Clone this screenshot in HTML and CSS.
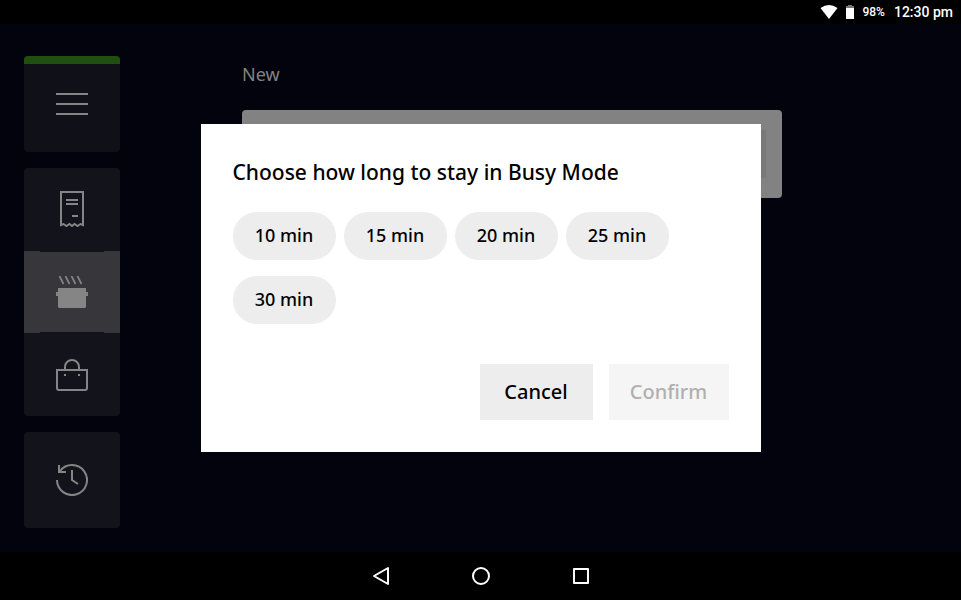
FILE: index.html
```html
<!DOCTYPE html>
<html lang="en">
<head>
<meta charset="utf-8">
<meta name="viewport" content="width=device-width, initial-scale=1">
<title>Busy Mode</title>
<link rel="stylesheet" href="styles.css">
</head>
<body>
<header class="status">
  <svg width="18" height="14" viewBox="0 0 18 14" aria-hidden="true"><path d="M0.500 3Q9-2.800 17.500 3L9 14Z" fill="#fff"/></svg>
  <svg width="8" height="14" viewBox="0 0 8 14" aria-hidden="true"><path d="M2 0H6V1H8V4H0V1H2Z" fill="#777"/><path d="M0 3H8V14H0Z" fill="#fff"/></svg>
  <span class="battery">98%</span>
  <time class="clock">12:30 pm</time>
</header>
<main class="stage">
  <nav class="side">
    <button class="tile menu" aria-label="Menu">
      <svg width="32" height="32" viewBox="0 0 32 32"><path d="M0 5H32V7H0ZM0 15H32V17H0ZM0 25H32V27H0Z" fill="#858585"/></svg>
    </button>
    <div class="group">
      <button class="tab" aria-label="Orders">
        <svg width="24" height="36" viewBox="0 0 24 36" fill="none" stroke="#858585" stroke-width="2"><path d="M1 34V1H23V34L20.500 33L17.500 35L14.500 33L12 35L9.500 33L6.500 35L3.500 33Z"/><path d="M6 9H18M6 13H18M12 25H18"/></svg>
      </button>
      <button class="tab active" aria-label="Preparing">
        <svg width="32" height="32" viewBox="0 0 32 32"><path d="M3.500 0L7.500 8M9.500 0L13.500 8M15.500 0L19.500 8M21.500 0L25.500 8" fill="none" stroke="#858585" stroke-width="1.700"/><path d="M2 12H30V16H32V20H30V31L29 32H3L2 31V20H0V16H2Z" fill="#858585"/></svg>
      </button>
      <button class="tab" aria-label="Ready">
        <svg width="32" height="32" viewBox="0 0 32 32" fill="none" stroke="#858585" stroke-width="2"><path d="M1 11H31V29Q31 31 29 31H3Q1 31 1 29ZM9 11V8A7 7 0 0 1 23 8V11M8 16H10M22 16H24"/></svg>
      </button>
    </div>
    <button class="tile" aria-label="History">
      <svg width="32" height="32" viewBox="0 0 32 32" fill="none" stroke="#858585" stroke-width="2"><path d="M1 16A15 15 0 1 0 4 7M3 1V8H10M16 6V16L22 20"/></svg>
    </button>
  </nav>
  <section class="orders">
    <h1>New</h1>
    <div class="card"><div class="thumb"></div></div>
  </section>
  <div class="overlay">
    <div class="dialog" role="dialog" aria-modal="true" aria-labelledby="title">
      <h2 id="title">Choose how long to stay in Busy Mode</h2>
      <div class="chips">
        <button>10 min</button>
        <button>15 min</button>
        <button>20 min</button>
        <button>25 min</button>
        <button>30 min</button>
      </div>
      <div class="actions">
        <button class="cancel">Cancel</button>
        <button class="confirm" disabled>Confirm</button>
      </div>
    </div>
  </div>
</main>
<footer class="system">
  <button aria-label="Back"><svg width="20" height="20" viewBox="0 0 20 20"><path d="M3 10L17 2V18Z"/></svg></button>
  <button aria-label="Home"><svg width="20" height="20" viewBox="0 0 20 20"><circle cx="10" cy="10" r="8"/></svg></button>
  <button aria-label="Recent apps"><svg width="20" height="20" viewBox="0 0 20 20"><path d="M3 3H17V17H3Z"/></svg></button>
</footer>
</body>
</html>
```
FILE: styles.css
```css
* {
  box-sizing: border-box;
}

body {
  margin: 0;
  min-height: 100vh;
  display: flex;
  flex-direction: column;
  background: #000;
  font-family: "Noto Sans", sans-serif;
}

button {
  border: 0;
  padding: 0;
  font: inherit;
  color: inherit;
  background: none;
}

svg {
  display: block;
}

h1,
h2 {
  margin: 0;
}

.status {
  height: 24px;
  padding-right: 8px;
  display: flex;
  align-items: center;
  justify-content: flex-end;
  gap: 8px;
  color: #fff;
  font-family: Roboto, sans-serif;
  font-weight: 500;
}

.battery {
  margin-right: 1px;
  font-size: 12px;
}

.clock {
  font-size: 14px;
}

.stage {
  position: relative;
  flex: 1;
  display: flex;
  padding: 32px 24px 24px;
  background: #03030d;
}

.side {
  width: 96px;
  display: flex;
  flex-direction: column;
  gap: 16px;
}

.tile,
.tab {
  display: flex;
  align-items: center;
  justify-content: center;
  background: #13131b;
}

.tile {
  height: 96px;
  border-radius: 4px;
}

.menu {
  background: linear-gradient(#204f11 8px, #101018 8px);
}

.group {
  height: 248px;
  display: grid;
  grid-template-rows: repeat(3, 1fr);
  border-radius: 4px;
  overflow: hidden;
}

.tab.active {
  background:
    linear-gradient(#111119, #111119) top / 64px 1px no-repeat,
    linear-gradient(#111119, #111119) bottom / 64px 1px no-repeat,
    #37363b;
}

.orders {
  flex: 1;
  max-width: 662px;
  padding: 4px 0 0 122px;
}

.orders h1 {
  color: #828282;
  font-size: 18px;
  line-height: 28px;
  font-weight: 400;
}

.card {
  height: 88px;
  margin-top: 22px;
  padding: 20px 16px;
  display: flex;
  justify-content: flex-end;
  background: #828282;
  border-radius: 4px;
}

.thumb {
  width: 48px;
  background: #797979;
}

.overlay {
  position: absolute;
  inset: 0;
  display: grid;
  place-items: center;
}

.dialog {
  width: 100%;
  max-width: 560px;
  padding: 32px;
  background: #fff;
  color: #000;
}

.dialog h2 {
  font-size: 21px;
  line-height: 32px;
  font-weight: 500;
}

.chips {
  margin-top: 24px;
  display: flex;
  flex-wrap: wrap;
  gap: 16px 8px;
}

.chips button {
  min-width: 103px;
  height: 48px;
  padding-bottom: 2px;
  border-radius: 24px;
  background: #ededed;
  font-size: 18px;
  font-weight: 500;
}

.actions {
  margin-top: 40px;
  display: flex;
  justify-content: flex-end;
  gap: 16px;
  font-size: 20px;
  font-weight: 500;
}

.actions button {
  height: 56px;
  padding-bottom: 2px;
}

.cancel {
  min-width: 113px;
  background: #ededed;
}

.confirm {
  min-width: 120px;
  background: #f5f5f5;
}

.actions .confirm {
  color: #b0b0b0;
}

.system {
  height: 48px;
  display: flex;
  align-items: center;
  justify-content: center;
  gap: 80px;
}

.system svg {
  fill: none;
  stroke: #fff;
  stroke-width: 2;
  stroke-linejoin: round;
}
```
